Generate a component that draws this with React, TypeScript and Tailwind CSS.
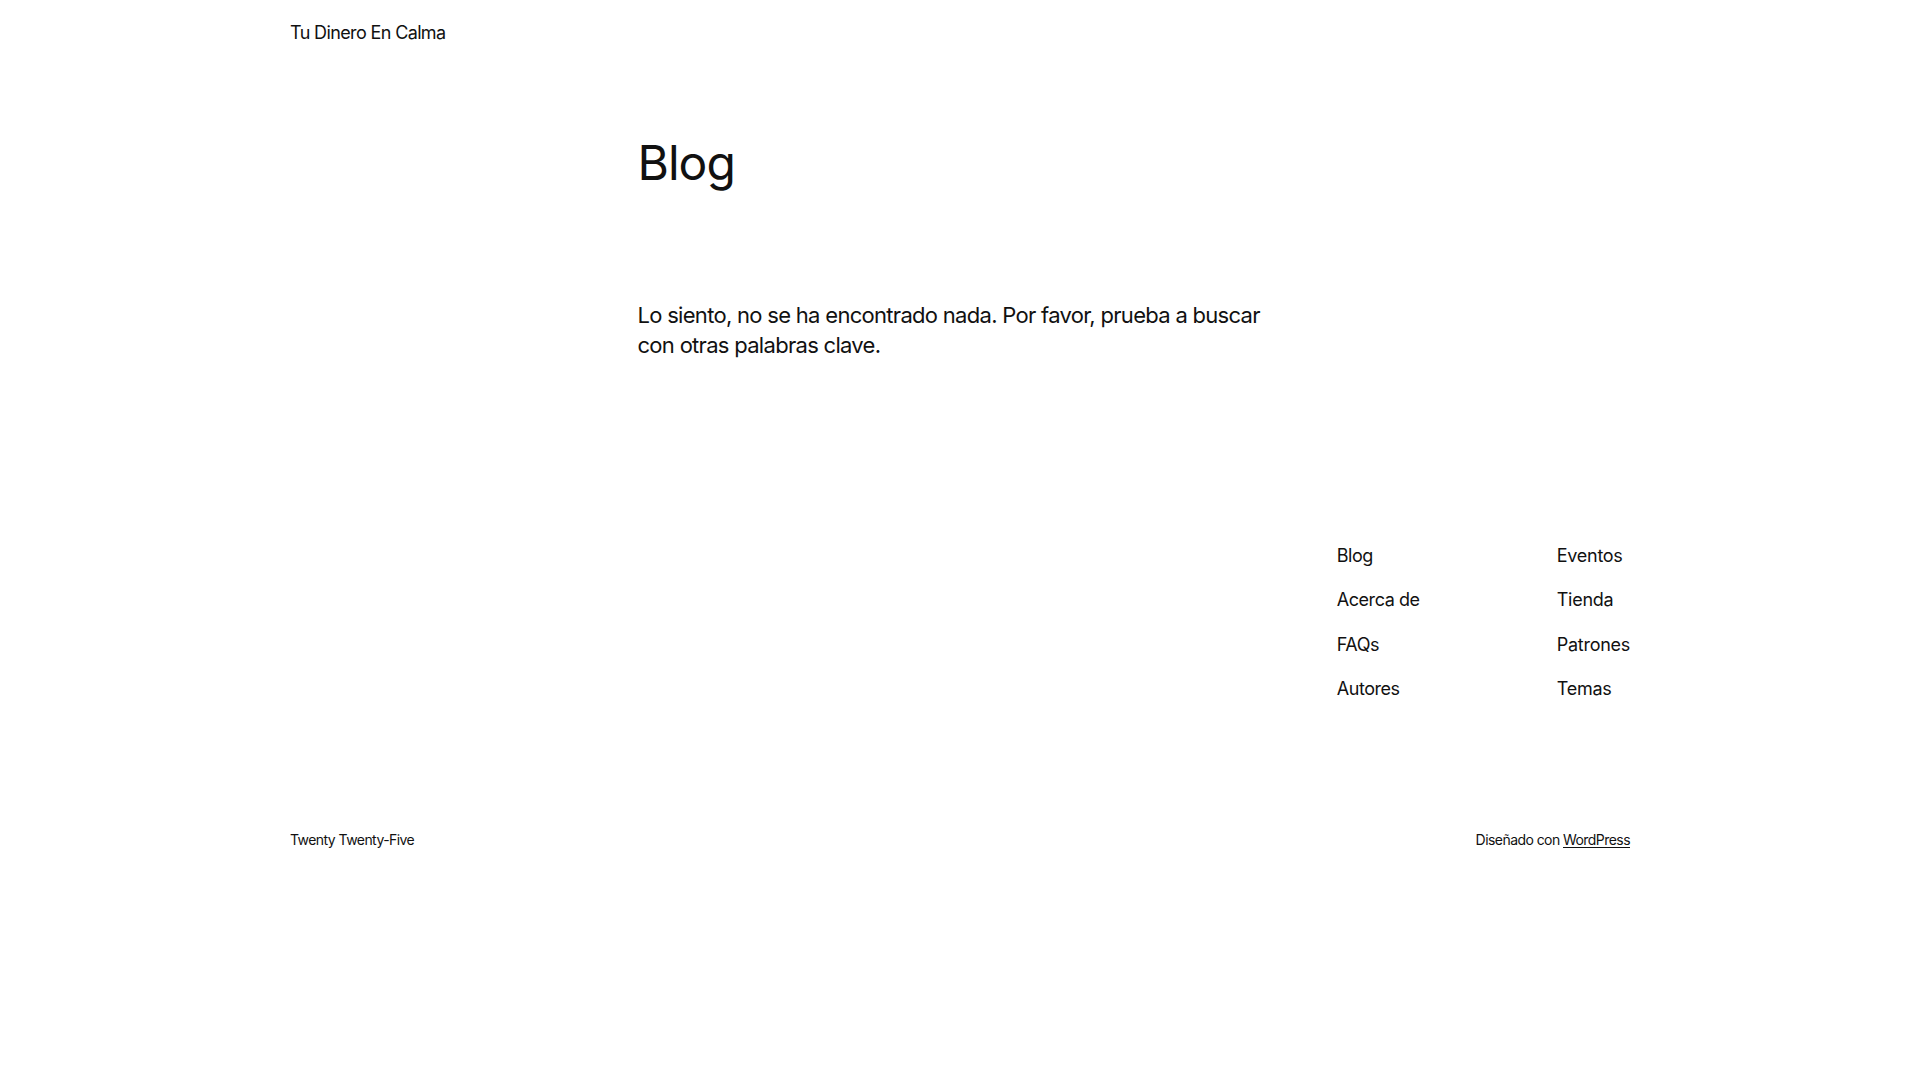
import React from "react";

export default function App() {
  const col1 = ["Blog", "Acerca de", "FAQs", "Autores"];
  const col2 = ["Eventos", "Tienda", "Patrones", "Temas"];
  return (
    <div
      className="min-h-screen bg-white text-[#111111]"
      style={{ fontFamily: "Inter, 'Noto Sans', sans-serif" }}
    >
      <header className="w-[1340px] mx-auto h-[64px] pt-[2px] flex items-center">
        <a className="text-[18px] leading-[1.4] tracking-[-0.035em]">Tu Dinero En Calma</a>
      </header>

      <main className="w-[645px] mx-auto pt-[70px]">
        <h1 className="text-[48px] leading-[1.2] font-normal tracking-[-0.02em]">Blog</h1>
        <p className="mt-[108px] text-[22px] leading-[30px] tracking-[-0.032em]">
          Lo siento, no se ha encontrado nada. Por favor, prueba a buscar con otras palabras clave.
        </p>
      </main>

      <footer className="w-[1340px] mx-auto">
        <nav className="mt-[174px] flex justify-end">
          <ul className="w-[220px] flex flex-col">
            {col1.map((t) => (
              <li key={t} className="text-[18px] leading-[44.5px] tracking-[-0.025em]">{t}</li>
            ))}
          </ul>
          <ul className="flex flex-col">
            {col2.map((t) => (
              <li key={t} className="text-[18px] leading-[44.5px] tracking-[-0.015em]">{t}</li>
            ))}
          </ul>
        </nav>
        <div className="mt-[118px] flex justify-between text-[14px] leading-[20px] tracking-[-0.04em]">
          <span>Twenty Twenty-Five</span>
          <span>
            Diseñado con <a className="underline underline-offset-2">WordPress</a>
          </span>
        </div>
      </footer>
    </div>
  );
}
